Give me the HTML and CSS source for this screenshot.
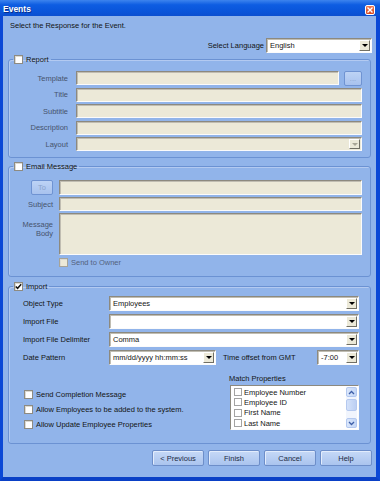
FILE: index.html
```html
<!DOCTYPE html>
<html lang="en">
<head>
    <meta charset="UTF-8">
    <meta name="viewport" content="width=device-width, initial-scale=1.0">
    <title>Events</title>
    <link rel="stylesheet" href="styles.css">
</head>
<body>

<div class="window">
    <div class="titlebar">
        <span class="title">Events</span>
        <span class="close">
            <svg width="6" height="6" viewBox="0 0 6 6"><path d="M0.5 0.5 L5.5 5.5 M5.5 0.5 L0.5 5.5" stroke="#fff" stroke-width="1.4"/></svg>
        </span>
    </div>

    <div class="frame">
        <p class="intro">Select the Response for the Event.</p>

        <div class="lang-row">
            <label>Select Language</label>
            <div class="select lang"><span class="value">English</span><span class="drop"></span></div>
        </div>

        <fieldset class="group report">
            <legend><span class="check"></span>Report</legend>
            <div class="form report-form">
                <label>Template</label>
                <div class="with-btn"><div class="field off"></div><button class="mini" disabled>...</button></div>
                <label>Title</label>
                <div class="field off"></div>
                <label>Subtitle</label>
                <div class="field off"></div>
                <label>Description</label>
                <div class="field off"></div>
                <label>Layout</label>
                <div class="select off"><span class="value"></span><span class="drop dim"></span></div>
            </div>
        </fieldset>

        <fieldset class="group mail">
            <legend><span class="check"></span>Email Message</legend>
            <div class="form mail-form">
                <button class="mini to" disabled>To</button>
                <div class="field off"></div>
                <label>Subject</label>
                <div class="field off"></div>
                <label class="body-label">Message<br>Body</label>
                <div class="field off"></div>
                <div class="owner">
                    <span class="check beige"></span>Send to Owner
                </div>
            </div>
        </fieldset>

        <fieldset class="group import">
            <legend><span class="check on"><svg width="7" height="7" viewBox="0 0 7 7"><path d="M0.8 3.4 L2.6 5.3 L6.2 1.2" fill="none" stroke="#111" stroke-width="1.5"/></svg></span>Import</legend>
            <div class="form import-form">
                <label>Object Type</label>
                <div class="select"><span class="value">Employees</span><span class="drop"></span></div>
                <label>Import File</label>
                <div class="select"><span class="value"></span><span class="drop"></span></div>
                <label>Import File Delimiter</label>
                <div class="select"><span class="value">Comma</span><span class="drop"></span></div>
                <label>Date Pattern</label>
                <div class="date-row">
                    <div class="select date"><span class="value">mm/dd/yyyy hh:mm:ss</span><span class="drop"></span></div>
                    <span class="gmt">Time offset from GMT</span>
                    <div class="select offset"><span class="value">-7:00</span><span class="drop"></span></div>
                </div>
            </div>

            <div class="import-lower">
                <div class="options">
                    <div class="opt"><span class="check"></span>Send Completion Message</div>
                    <div class="opt"><span class="check"></span>Allow Employees to be added to the system.</div>
                    <div class="opt"><span class="check"></span>Allow Update Employee Properties</div>
                </div>
                <div class="match">
                    <div class="match-title">Match Properties</div>
                    <div class="listbox">
                        <div class="items">
                            <div class="item"><span class="box"></span>Employee Number</div>
                            <div class="item"><span class="box"></span>Employee ID</div>
                            <div class="item"><span class="box"></span>First Name</div>
                            <div class="item"><span class="box"></span>Last Name</div>
                        </div>
                        <div class="scroll">
                            <span class="arrow"><svg width="7" height="5" viewBox="0 0 7 5"><path d="M1 4 L3.5 1.5 L6 4" fill="none" stroke="#3e5fa8" stroke-width="1.3"/></svg></span>
                            <span class="track"><span class="thumb"></span></span>
                            <span class="arrow"><svg width="7" height="5" viewBox="0 0 7 5"><path d="M1 1 L3.5 3.5 L6 1" fill="none" stroke="#3e5fa8" stroke-width="1.3"/></svg></span>
                        </div>
                    </div>
                </div>
            </div>
        </fieldset>

        <div class="buttons">
            <button class="btn">&lt; Previous</button>
            <button class="btn">Finish</button>
            <button class="btn">Cancel</button>
            <button class="btn">Help</button>
        </div>
    </div>
</div>

</body>
</html>
```

FILE: styles.css
```css
* {
    box-sizing: border-box;
}
body {
    margin: 0;
    font-family: "Liberation Sans", Arial, sans-serif;
    font-size: 7.5px;
    color: #141414;
}
.window {
    width: 380px;
    height: 481px;
    display: flex;
    flex-direction: column;
    background-color: #91b4ea;
}
.titlebar {
    height: 16px;
    flex: none;
    display: flex;
    align-items: center;
    justify-content: space-between;
    padding: 2px 5px 0 3px;
    background: linear-gradient(#3d84ee, #0e5de2 30%, #0a55da 70%, #0b4fd0);
    color: white;
    font-weight: bold;
    font-size: 8.5px;
}
.title {
    text-shadow: 1px 1px 0 #0a2e8a;
}
.close {
    width: 10px;
    height: 10px;
    margin-top: 2px;
    display: flex;
    align-items: center;
    justify-content: center;
    background: linear-gradient(#ec7a55, #d9481f);
    border: 1px solid #fff;
    border-radius: 2px;
}
.frame {
    flex: 1;
    display: flex;
    flex-direction: column;
    border-left: 3px solid #0b48d6;
    border-right: 4px solid #0b48d6;
    border-bottom: 4px solid #0a40c6;
}
.intro {
    margin: 4px 0 0 7px;
    line-height: 11px;
}
.lang-row {
    display: flex;
    justify-content: flex-end;
    align-items: center;
    gap: 2px;
    margin-top: 7px;
    padding-right: 4px;
}
.select.lang {
    width: 106px;
    height: 15px;
}

/* group boxes */
.group {
    margin: 1px 5px 0 5px;
    padding: 6px 8px 6px 0;
    border: 1px solid #6b92d3;
    border-radius: 3px;
    box-shadow: inset 1px 1px 0 #b3caf1;
    min-width: 0;
}
.group legend {
    display: flex;
    align-items: center;
    gap: 3px;
    height: 11px;
    line-height: 11px;
    margin-left: 4px;
    padding: 0 2px 0 1px;
}
.check {
    width: 9px;
    height: 9px;
    flex: none;
    display: inline-flex;
    align-items: center;
    justify-content: center;
    background: #fff;
    border: 1px solid #8e8b82;
    box-shadow: inset 1px 1px 0 #dcdad2;
}
.check.beige {
    background: #ece9d8;
    border-color: #a6a398;
}
.form {
    display: grid;
    align-items: center;
}
.form label {
    text-align: right;
    color: #46536c;
}
.report-form {
    grid-template-columns: 59px 1fr;
    column-gap: 8px;
    row-gap: 2.5px;
    grid-auto-rows: 14px;
}
.field {
    height: 100%;
    background: #fff;
    border: 1px solid;
    border-color: #8c897f #fbfbfb #fbfbfb #8c897f;
    box-shadow: inset 1px 1px 0 #c0bdb2;
}
.field.off {
    background: #ece9d8;
}
.with-btn {
    display: flex;
    align-items: center;
    gap: 5px;
    height: 100%;
}
.with-btn .field {
    flex: 1;
}
.mini {
    width: 18px;
    height: 15px;
    padding: 0;
    font: inherit;
    color: #8aa3cc;
    background: linear-gradient(#bdd3f5, #a8c2ee);
    border: 1px solid #6f93d2;
    border-radius: 2px;
}
.select {
    height: 100%;
    display: flex;
    align-items: center;
    background: #fff;
    border: 1px solid;
    border-color: #8c897f #fbfbfb #fbfbfb #8c897f;
    box-shadow: inset 1px 1px 0 #c0bdb2;
    padding: 1px;
}
.select.off {
    background: #ece9d8;
}
.select .value {
    flex: 1;
    padding-left: 2px;
    white-space: nowrap;
    overflow: hidden;
}
.drop {
    width: 11px;
    height: 100%;
    flex: none;
    display: flex;
    align-items: center;
    justify-content: center;
    background: #ece9d8;
    border: 1px solid;
    border-color: #fff #716f64 #716f64 #fff;
}
.drop::after {
    content: "";
    border-left: 3px solid transparent;
    border-right: 3px solid transparent;
    border-top: 3px solid #000;
}
.drop.dim::after {
    border-top-color: #a8a595;
}

/* email */
.mail {
    margin-top: 3px;
    padding: 8px 8px 9px 0;
}
.mail-form {
    grid-template-columns: 44px 1fr;
    grid-template-rows: 15px 14px 42px 10px;
    column-gap: 6px;
    row-gap: 2px;
}
.mini.to {
    width: 22px;
    justify-self: end;
}
.mail-form .field {
    align-self: stretch;
}
.body-label {
    align-self: start;
    padding-top: 8px;
    line-height: 8.5px;
}
.owner {
    grid-column: 2;
    display: flex;
    align-items: center;
    gap: 3px;
    color: #53627e;
}

/* import */
.import {
    margin-top: 4px;
    padding: 4px 11px 13px 0;
}
.import-form {
    grid-template-columns: 100px 1fr;
    grid-auto-rows: 15px;
    row-gap: 3px;
}
.import-form label {
    text-align: left;
    padding-left: 14px;
    color: #141414;
}
.date-row {
    display: flex;
    align-items: center;
    height: 100%;
}
.select.date {
    width: 107px;
}
.gmt {
    margin-left: 7px;
}
.select.offset {
    width: 42px;
    margin-left: auto;
}
.import-lower {
    display: flex;
    justify-content: space-between;
    margin-top: 9px;
}
.options {
    display: flex;
    flex-direction: column;
    gap: 5px;
    padding: 15px 0 0 15px;
}
.opt {
    display: flex;
    align-items: center;
    gap: 3px;
    height: 10px;
}
.match {
    width: 130px;
}
.match-title {
    line-height: 9px;
}
.listbox {
    display: flex;
    height: 45px;
    margin: 2px 0 0 1px;
    background: #fff;
    border: 1px solid;
    border-color: #8c897f #fbfbfb #fbfbfb #8c897f;
}
.items {
    flex: 1;
    padding: 1px 3px;
}
.item {
    display: flex;
    align-items: center;
    gap: 2px;
    height: 10.3px;
}
.box {
    width: 8px;
    height: 8px;
    border: 1px solid #a3a3a3;
    background: #fff;
}
.scroll {
    width: 11px;
    margin: 1px 1px 1px 0;
    display: flex;
    flex-direction: column;
    gap: 1px;
    background: #f1f5fd;
}
.arrow {
    height: 10px;
    display: flex;
    align-items: center;
    justify-content: center;
    background: linear-gradient(90deg, #dbe7fb, #c3d6f6);
    border: 1px solid #b3c8ef;
    border-radius: 2px;
}
.track {
    flex: 1;
    display: flex;
    flex-direction: column;
}
.thumb {
    height: 12px;
    margin-top: 1px;
    background: linear-gradient(90deg, #d4e2fa, #bccff3);
    border: 1px solid #b5c9ef;
    border-radius: 2px;
}

/* footer buttons */
.buttons {
    display: flex;
    justify-content: flex-end;
    gap: 4px;
    margin-top: 6px;
    padding-right: 4px;
}
.btn {
    width: 52px;
    height: 16px;
    padding: 0;
    font: inherit;
    color: #1c2a44;
    background: linear-gradient(#c6d9f7, #aac4ee);
    border: 1px solid #6d8ec9;
    border-radius: 2px;
    box-shadow: inset 1px 1px 0 #e2ecfc;
}
```
